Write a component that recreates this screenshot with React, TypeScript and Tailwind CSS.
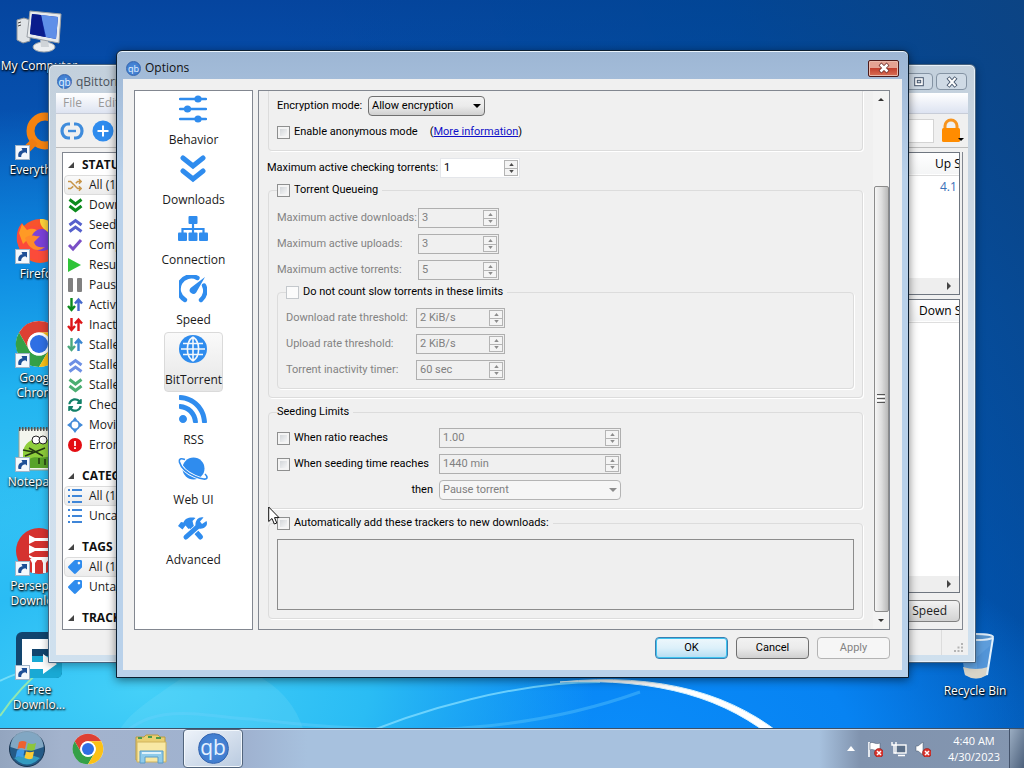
import type { ReactNode } from "react";
import clsx from "clsx";
import { FaRss, FaSyncAlt, FaTag } from "react-icons/fa";

/* ---------- shared drawings ---------- */

function Svg({ size, box = 28, children, className }: { size?: string; box?: number; children: ReactNode; className?: string }) {
  return (
    <svg viewBox={`0 0 ${box} ${box}`} className={clsx(size ?? "size-7", "shrink-0", className)} fill="none" aria-hidden="true">
      {children}
    </svg>
  );
}

function QbLogo({ className, text }: { className: string; text: string }) {
  return (
    <span
      className={clsx(
        "flex shrink-0 items-center justify-center rounded-full border border-[#3566b0] bg-radial from-[#4d8fe0] to-[#3b74c6] leading-none text-[#e4f1ff]",
        className,
      )}
    >
      <span className={text}>qb</span>
    </span>
  );
}

function ChromeLogo({ className }: { className: string }) {
  return (
    <svg viewBox="0 0 48 48" className={className} aria-hidden="true">
      <circle cx="24" cy="24" r="23" fill="#fff" />
      <path d="M4 12.5A23 23 0 0 1 43.9 12.5H24A11.5 11.5 0 0 0 14 29.8Z" fill="#dd4033" />
      <path d="M4 12.5A23 23 0 0 0 24 47L34 29.8A11.5 11.5 0 0 1 14 29.8Z" fill="#34a047" />
      <path d="M43.9 12.5A23 23 0 0 1 24 47L34 29.8A11.5 11.5 0 0 0 34 18.3L24 12.5Z" fill="#fbc116" />
      <circle cx="24" cy="24" r="11.5" fill="#fff" />
      <circle cx="24" cy="24" r="9" fill="#2f6fe4" />
    </svg>
  );
}

/* ---------- desktop ---------- */

function Wallpaper() {
  return (
    <div className="absolute inset-0 bg-[linear-gradient(90deg,#0669d6_0%,#0668d8_60%,#0560cc_100%)]">
      <div className="absolute inset-0 bg-[linear-gradient(180deg,#05459f_0%,#0650ae_14%,#0660c8_40%,transparent_80%)]" />
      <div className="absolute inset-0 bg-[linear-gradient(245deg,#0c4484_0%,#0046909c_22%,transparent_55%)]" />
      <div className="absolute inset-0 bg-[radial-gradient(ellipse_70%_60%_at_6%_74%,#3cc8f6_0%,#22b4f0_38%,#0e8ce2_66%,transparent_100%)]" />
      <div className="absolute inset-0 bg-[radial-gradient(ellipse_46%_30%_at_60%_96%,#0a8cfa_0%,#0783f2_50%,transparent_100%)]" />
      <div className="absolute inset-0 bg-[radial-gradient(ellipse_44%_30%_at_14%_90%,#44d0f8_0%,#2abcf4_50%,transparent_100%)]" />
      <svg viewBox="0 0 1024 768" preserveAspectRatio="none" className="absolute inset-0 size-full" fill="none">
        <path d="M0 681C16 672 30 672 48 660" stroke="#8ee8fa" strokeWidth="2" opacity=".7" />
        <path d="M0 716C12 698 26 682 48 664" stroke="#a8f0a0" strokeWidth="2" opacity=".8" />
        <path d="M116 740C120 718 150 700 182 678H262Q298 700 306 740Z" fill="#8ce6fb" opacity=".18" />
        <path d="M116 742C150 700 200 716 250 719C370 732 500 742 640 692" stroke="#6cd0fc" strokeWidth="3" opacity=".35" />
        <path d="M345 742C420 708 520 682 600 682" stroke="#7fdcff" strokeWidth="2" opacity=".8" />
        <path d="M560 682C660 672 736 694 790 742H778C726 698 660 678 560 682Z" fill="#fff" stroke="#d6f3ff" />
      </svg>
    </div>
  );
}

function ShortcutArrow() {
  return (
    <svg viewBox="0 0 15 15" className="absolute bottom-0 left-0 size-[15px]" aria-hidden="true">
      <rect x=".5" y=".5" width="14" height="14" fill="#f4f8fc" stroke="#9fb4c8" />
      <path d="M3.5 12C2.5 8 4.5 5.5 7.5 5.2L6.5 3H12V8.5L10.3 7.2C7.5 7.5 6 9.5 6.2 12Z" fill="#1d4f96" />
    </svg>
  );
}

function DesktopIcon({ label, shortcut = true, children }: { label: ReactNode; shortcut?: boolean; children: ReactNode }) {
  return (
    <a
      href="#"
      className="flex h-[104px] flex-col items-center text-center text-xs leading-[15px] whitespace-nowrap text-white [text-shadow:0_1px_2px_#000,1px_1px_2px_#000]"
    >
      <span className="relative mb-0.5 block size-12">
        {children}
        {shortcut && <ShortcutArrow />}
      </span>
      {label}
    </a>
  );
}

function DesktopIcons() {
  return (
    <nav className="absolute top-2 left-px flex w-[76px] flex-col">
      <DesktopIcon label="My Computer" shortcut={false}>
        <svg viewBox="0 0 48 48" className="size-12">
          <path d="M2 12 9 10 15 12V33L8 35 2 32Z" fill="#dfe3e6" stroke="#8d9399" />
          <path d="M3 15 6 14M3 18 6 17" stroke="#444" />
          <ellipse cx="29" cy="39" rx="11" ry="5" fill="#eceff1" stroke="#a3a9ad" />
          <path d="M25 30 33 31 34 39H26Z" fill="#cfd4d8" />
          <path d="M15 3 46 6 44 35 12 29Z" fill="#e8ebed" stroke="#9aa0a6" />
          <path d="M17 6 43 9 41 31 15 26Z" fill="#1230a8" />
          <path d="M26 7 43 9 41 31 31 29Z" fill="#5f8fe8" />
          <path d="M17 6 26 7 30 29 15 26Z" fill="#0a1c8c" />
        </svg>
      </DesktopIcon>
      <DesktopIcon label="Everything">
        <svg viewBox="0 0 48 48" className="size-12" fill="none">
          <circle cx="30" cy="19" r="14.5" stroke="#f58310" strokeWidth="8" />
          <path d="M20 29 8 41" stroke="#f07c10" strokeWidth="8" />
        </svg>
      </DesktopIcon>
      <DesktopIcon label="Firefox">
        <svg viewBox="0 0 48 48" className="size-12">
          <circle cx="25" cy="25" r="22" fill="#f8532c" />
          <path d="M2 26C1 16 4 10 7 7L11 13C18 8 24 10 27 13C18 14 14 20 17 28C22 38 36 36 40 28L46 32C38 48 8 50 2 26Z" fill="#fb4b3a" />
          <path d="M4 17 7 8 12 14C16 12 22 12 24 17L14 22 8 28Z" fill="#ff9a25" />
          <circle cx="27" cy="24" r="11" fill="#7a41d8" />
          <path d="M25 3C34 2 46 12 46 25C44 19 40 17 37 20C32 14 24 12 25 3Z" fill="#ffd43c" />
          <path d="M10 22C16 17 20 21 25 20L19 26C20 31 26 32 30 31C22 38 13 32 10 22Z" fill="#ff8a2a" />
        </svg>
      </DesktopIcon>
      <DesktopIcon
        label={
          <>
            Google
            <br />
            Chrome
          </>
        }
      >
        <ChromeLogo className="size-12" />
      </DesktopIcon>
      <DesktopIcon label="Notepad++">
        <svg viewBox="0 0 48 48" className="size-12">
          <path d="M4 5H46V46H4Z" fill="#f3f6ee" stroke="#98a090" />
          <path d="M4 5H46" stroke="#555" strokeWidth="4" strokeDasharray="1.5 1.5" />
          <path d="M8 28C9 18 20 12 30 15C42 16 44 34 34 40L8 36Z" fill="#8fcf3c" />
          <path d="M12 38C18 28 26 38 40 30V44H12Z" fill="#58a32a" />
          <circle cx="21" cy="16" r="4" fill="#fff" stroke="#222" />
          <circle cx="28" cy="16" r="4" fill="#fff" stroke="#222" />
          <path d="M8 26 18 28M10 32 30 24M14 24 28 32M24 40V34M30 41V35" stroke="#223812" strokeWidth="1.5" />
        </svg>
      </DesktopIcon>
      <DesktopIcon
        label={
          <>
            Persepolis
            <br />
            Download
          </>
        }
      >
        <svg viewBox="0 0 48 48" className="size-12">
          <circle cx="24" cy="23" r="23" fill="#d5322f" />
          <path d="M14 7 20 10H36V13H20L14 16ZM14 17 20 20H36V23H20L14 26ZM14 27 18 29H36V32H18L14 29ZM15 31H23L20 35V45H17V35ZM26 31H34L31 35V45H28V35Z" fill="#fff" />
        </svg>
      </DesktopIcon>
      <DesktopIcon
        label={
          <>
            Free
            <br />
            Downlo...
          </>
        }
      >
        <svg viewBox="0 0 48 48" className="size-12">
          <rect x="1" y="0" width="46" height="46" rx="6" fill="#12456e" />
          <path d="M12 46V24H47V40Q47 46 41 46Z" fill="#19a9d4" />
          <path d="M7 7H38V17H17V30H28V22L42 32 28 42V37H7Z" fill="#fff" />
        </svg>
      </DesktopIcon>
    </nav>
  );
}

function RecycleBin() {
  return (
    <a
      href="#"
      className="absolute right-2.5 bottom-[70px] flex w-[78px] flex-col items-center text-center text-xs leading-[15px] whitespace-nowrap text-white [text-shadow:0_1px_2px_#000,1px_1px_2px_#000]"
    >
      <svg viewBox="0 0 48 48" className="mb-0.5 size-12" aria-hidden="true">
        <path d="M8 4 42 4 36 42Q25 49 14 42Z" fill="#8fc0ec" opacity=".65" />
        <path d="M26 24 40 12 36 40 26 42Z" fill="#4d8fd6" opacity=".6" />
        <path d="M12 34Q25 38 37 34L36 42Q25 49 14 42Z" fill="#d8d4c8" />
        <ellipse cx="25" cy="4" rx="17" ry="3" fill="#5592cc" stroke="#dbe9f5" strokeWidth="2" />
        <path d="M42 5 36 42" stroke="#e3f1fc" strokeWidth="2" />
      </svg>
      Recycle Bin
    </a>
  );
}

/* ---------- main window ---------- */

const chevronsDown = "M1.5 1.5 7.5 6 13.5 1.5M1.5 8 7.5 12.5 13.5 8";
const chevronsUp = "M1.5 7 7.5 2.5 13.5 7M1.5 13.5 7.5 9 13.5 13.5";

function Chevrons({ d, color }: { d: string; color: string }) {
  return (
    <Svg size="size-[15px]" box={15}>
      <path d={d} stroke={color} strokeWidth="3" />
    </Svg>
  );
}

function UpDown({ down, up }: { down: string; up: string }) {
  return (
    <Svg size="size-4" box={16}>
      <path d="M4.5 1V12M1 9 4.5 13 8 9" stroke={down} strokeWidth="2.4" />
      <path d="M11.5 14V4M8 6.5 11.5 2.5 15 6.5" stroke={up} strokeWidth="2.4" />
    </Svg>
  );
}

function ListIcon() {
  return (
    <Svg size="size-[14px]" box={14}>
      <path d="M0 1H2M0 7H2M0 13H2M4 1H14M4 7H14M4 13H14" stroke="#3f86d8" strokeWidth="2" />
    </Svg>
  );
}

const tagIcon = <FaTag className="size-[14px] rotate-90 text-[#2f8cee]" />;

const filters = [
  {
    title: "STATUS",
    rows: [
      {
        label: "All (1)",
        icon: (
          <Svg size="size-[14px]" box={16}>
            <path d="M0 4H3L11 12H15M0 12H3L6 9.5M9 6 11 4H15M12.5 1.5 15 4 12.5 6.5M12.5 9.5 15 12 12.5 14.5" stroke="#c79549" strokeWidth="1.8" />
          </Svg>
        ),
      },
      { label: "Downloading (0)", icon: <Chevrons d={chevronsDown} color="#0c8a1c" /> },
      { label: "Seeding (1)", icon: <Chevrons d={chevronsUp} color="#5560cc" /> },
      {
        label: "Completed (1)",
        icon: (
          <Svg size="size-4" box={16}>
            <path d="M2 8 6 12 14 3" stroke="#7a4fc6" strokeWidth="3" />
          </Svg>
        ),
      },
      {
        label: "Resumed (1)",
        icon: (
          <Svg size="size-4" box={16}>
            <path d="M1 1 14 8 1 15Z" fill="#2fc438" />
          </Svg>
        ),
      },
      {
        label: "Paused (0)",
        icon: (
          <Svg size="size-4" box={16}>
            <rect x="1" y="1" width="5" height="14" rx="1" fill="#808080" />
            <rect x="10" y="1" width="5" height="14" rx="1" fill="#808080" />
          </Svg>
        ),
      },
      { label: "Active (1)", icon: <UpDown down="#0c8a1c" up="#4468cc" /> },
      { label: "Inactive (0)", icon: <UpDown down="#dd1518" up="#dd1518" /> },
      { label: "Stalled (0)", icon: <UpDown down="#4aa87c" up="#3a86d0" /> },
      { label: "Stalled Uploading (0)", icon: <Chevrons d={chevronsUp} color="#6e90e4" /> },
      { label: "Stalled Downloading (0)", icon: <Chevrons d={chevronsDown} color="#4cae72" /> },
      { label: "Checking (0)", icon: <FaSyncAlt className="size-[14px] text-[#128068]" /> },
      {
        label: "Moving (0)",
        icon: (
          <Svg size="size-4" box={16}>
            <circle cx="8" cy="8" r="4.3" stroke="#428ad8" strokeWidth="1.8" />
            <path d="M8 0 10.5 3.5H5.5ZM8 16 10.5 12.5H5.5ZM0 8 3.5 5.5V10.5ZM16 8 12.5 5.5V10.5Z" fill="#428ad8" />
          </Svg>
        ),
      },
      {
        label: "Errored (0)",
        icon: (
          <Svg size="size-[14px]" box={16}>
            <circle cx="8" cy="8" r="8" fill="#e40d12" />
            <path d="M8 3.5V9M8 10.5V12.5" stroke="#fff" strokeWidth="2" />
          </Svg>
        ),
      },
    ],
  },
  {
    title: "CATEGORIES",
    rows: [
      { label: "All (1)", icon: <ListIcon /> },
      { label: "Uncategorized (1)", icon: <ListIcon /> },
    ],
  },
  {
    title: "TAGS",
    rows: [
      { label: "All (1)", icon: tagIcon },
      { label: "Untagged (1)", icon: tagIcon },
    ],
  },
  { title: "TRACKERS", rows: [] },
];

function FilterSidebar() {
  return (
    <aside className="flex w-[200px] shrink-0 flex-col gap-[11px] overflow-hidden border border-[#828790] bg-white pt-0.5">
      {filters.map((group) => (
        <section key={group.title}>
          <h2 className="flex h-5 items-center pl-[5px] text-xs font-bold text-[#111]">
            <Svg size="size-[6px]" box={7} className="mr-2">
              <path d="M7 0V7H0Z" fill="#444" />
            </Svg>
            {group.title}
          </h2>
          <ul>
            {group.rows.map((row, i) => (
              <li
                key={row.label}
                className={clsx(
                  "ml-px flex h-5 items-center gap-1.5 rounded-sm border pl-0.5 text-xs whitespace-nowrap text-[#1c1c1c]",
                  i === 0 ? "border-[#dcdcdc] bg-linear-to-b from-[#fafafa] to-[#ececec]" : "border-transparent",
                )}
              >
                <span className="flex w-4 justify-center">{row.icon}</span>
                {row.label}
              </li>
            ))}
          </ul>
        </section>
      ))}
    </aside>
  );
}

function TransferTable({ header, indent, value, className }: { header: string; indent: string; value?: string; className: string }) {
  return (
    <div className={clsx("flex flex-col border border-[#6f7680] bg-white", className)}>
      <table className="w-full table-fixed text-xs">
        <thead>
          <tr className="h-[22px] border-b border-[#dedede] bg-linear-to-b from-white to-[#f4f5f6]">
            <th className="text-left font-normal">Name</th>
            <th className={clsx("w-12 overflow-hidden text-left font-normal whitespace-nowrap", indent)}>{header}</th>
          </tr>
        </thead>
        {value && (
          <tbody>
            <tr className="h-6">
              <td />
              <td className="overflow-hidden pl-[29px] whitespace-nowrap text-[#3a70b8]">{value}</td>
            </tr>
          </tbody>
        )}
      </table>
      <div className="mt-auto flex h-4 items-center justify-end bg-[#eeeeee] pr-1.5">
        <Svg size="size-2" box={8}>
          <path d="M2 0 6 4 2 8Z" fill="#444" />
        </Svg>
      </div>
    </div>
  );
}

function MainWindow() {
  return (
    <section className="absolute top-16 right-12 bottom-[105px] left-12 flex flex-col rounded-t-md border border-[#47627d] bg-linear-to-b from-[#c3d0dc] via-[#d2dfec] to-[#cfe0ee] px-[7px] pb-[7px] shadow-[inset_0_0_0_1px_#e8f1f9,0_2px_8px_#00000059]">
      <header className="flex h-7 shrink-0 items-start">
        <QbLogo className="mt-[9px] ml-px size-[15px]" text="text-[10px]" />
        <h1 className="mt-2 ml-1 text-xs leading-[18px] text-[#4b535c]">qBittorrent v4.5.2</h1>
        <div className="mt-2 mr-px ml-auto flex gap-[3px]">
          <button type="button" aria-label="Minimize" className="h-[17px] w-7 rounded-sm border border-[#8493a3] bg-[#cfdae5]" />
          <button type="button" aria-label="Maximize" className="flex h-[17px] w-7 items-center justify-center rounded-sm border border-[#8493a3] bg-[#cfdae5]">
            <Svg size="size-2.5" box={10}>
              <rect x=".7" y=".7" width="8.6" height="8" fill="#fff" stroke="#46566c" />
              <rect x="3.3" y="3.3" width="3.4" height="2.5" fill="#cfdae5" stroke="#46566c" />
            </Svg>
          </button>
          <button type="button" aria-label="Close" className="flex h-[17px] w-[31px] items-center justify-center rounded-sm border border-[#8493a3] bg-[#cfdae5]">
            <Svg size="size-3" box={12}>
              <path d="M2 1.5 10 10.5M10 1.5 2 10.5" stroke="#46566c" strokeWidth="4" />
              <path d="M2.5 2 9.5 10M9.5 2 2.5 10" stroke="#fff" strokeWidth="2" />
            </Svg>
          </button>
        </div>
      </header>
      <div className="flex min-h-0 flex-1 flex-col bg-[#f0f0f0]">
        <nav className="flex h-[21px] shrink-0 items-center gap-4 border-b border-[#c8cdd8] bg-linear-to-b from-white via-[#eef1f8] to-[#dde3f1] pl-[7px] text-xs text-[#9a9a9a]">
          <a href="#">File</a>
          <a href="#">Edit</a>
          <a href="#">View</a>
        </nav>
        <div className="flex h-[34px] shrink-0 items-center gap-2 border-b border-[#bdbdbd] pl-1">
          <button type="button" aria-label="Add torrent link">
            <Svg size="size-6" box={24}>
              <path d="M10 5H8A6 7 0 0 0 8 19H10M14 5H16A6 7 0 0 1 16 19H14" stroke="#3f8cdc" strokeWidth="3.2" />
              <path d="M8 12H16" stroke="#3f8cdc" strokeWidth="2.4" />
            </Svg>
          </button>
          <button type="button" aria-label="Add torrent file">
            <Svg size="size-[22px]" box={22}>
              <circle cx="11" cy="11" r="10.5" fill="#2f8cee" />
              <path d="M11 5.5V16.5M5.5 11H16.5" stroke="#fff" strokeWidth="2" />
            </Svg>
          </button>
          <input type="text" aria-label="Filter torrents" className="ml-auto h-6 w-40 border border-[#d4d4d4] bg-white" />
          <button type="button" aria-label="Lock" className="mr-1">
            <svg viewBox="2 0 22 26" className="h-[26px] w-[22px]" fill="none">
              <path d="M5 12V8A6 6 0 0 1 17 8V12" stroke="#f7941e" strokeWidth="3" />
              <rect x="2" y="10" width="18" height="14" rx="1.5" fill="#ff8c00" />
              <path d="M18 20H24L21 23Z" fill="#000" />
            </svg>
          </button>
        </div>
        <main className="flex min-h-0 flex-1 gap-1 pt-1 pr-[5px] pl-1.5">
          <FilterSidebar />
          <div className="flex min-w-0 flex-1 flex-col border-r border-b border-[#828790] pr-0.5">
            <TransferTable header="Up Speed" indent="pl-6" value="4.1 KiB/s" className="h-[143px] shrink-0" />
            <TransferTable header="Down Speed" indent="pl-2" className="mt-1 min-h-0 flex-1" />
            <div className="flex h-9 shrink-0 items-center justify-end">
              <button
                type="button"
                className="flex h-[22px] items-center gap-1 rounded-sm border border-[#808080] bg-linear-to-b from-[#f2f2f2] to-[#d2d2d2] pr-3 pl-2 text-xs text-[#222]"
              >
                <span className="h-3 w-2 bg-[#25b83a]" />
                Speed
              </button>
            </div>
          </div>
        </main>
        <footer className="flex h-[25px] shrink-0 items-end justify-end">
          <span className="flex h-full w-[27px] items-end justify-end border-l border-[#dcdcdc] pr-1 pb-0.5">
            <Svg size="size-2.5" box={10}>
              <path d="M7 1H9M7 4.5H9M7 8H9M3.5 4.5H5.5M3.5 8H5.5M0 8H2" stroke="#b4b4b4" strokeWidth="2" />
            </Svg>
          </span>
        </footer>
      </div>
    </section>
  );
}

/* ---------- options dialog ---------- */

const sections = [
  {
    label: "Behavior",
    icon: (
      <Svg>
        <path d="M1 4H27M1 14H27M1 24H27" stroke="currentColor" strokeWidth="2.4" strokeLinecap="round" />
        <circle cx="19" cy="4" r="3.6" fill="currentColor" />
        <circle cx="8.5" cy="14" r="3.6" fill="currentColor" />
        <circle cx="19" cy="24" r="3.6" fill="currentColor" />
      </Svg>
    ),
  },
  {
    label: "Downloads",
    icon: (
      <Svg>
        <path d="M4 3 14 11 24 3M4 16 14 24 24 16" stroke="currentColor" strokeWidth="5" strokeLinecap="round" />
      </Svg>
    ),
  },
  {
    label: "Connection",
    icon: (
      <svg viewBox="0 0 32 28" className="h-7 w-8" fill="none">
        <rect x="11.5" y="1" width="9" height="8" rx="1" fill="currentColor" />
        <path d="M16 8V20M5.5 20V14H26.5V20" stroke="currentColor" strokeWidth="2.2" />
        <rect x="1" y="17.5" width="9" height="8.5" rx="1" fill="currentColor" />
        <rect x="11.5" y="17.5" width="9" height="8.5" rx="1" fill="currentColor" />
        <rect x="22" y="17.5" width="9" height="8.5" rx="1" fill="currentColor" />
      </svg>
    ),
  },
  {
    label: "Speed",
    icon: (
      <Svg>
        <path d="M6 25A12 12 0 0 1 18.5 3M25 10.5A12 12 0 0 1 22 25" stroke="currentColor" strokeWidth="4.4" strokeLinecap="round" />
        <path d="M26 2 17.2 17.5A3.6 3.6 0 1 1 11.5 13Z" fill="currentColor" />
      </Svg>
    ),
  },
  {
    label: "BitTorrent",
    icon: (
      <Svg>
        <circle cx="14" cy="14" r="14" fill="currentColor" />
        <path
          d="M14 2V26M2 14H26M4 8.5H24M4 19.5H24M14 2C6.5 7 6.5 21 14 26M14 2C21.5 7 21.5 21 14 26"
          stroke="#f4f8fc"
          strokeWidth="1.6"
        />
      </Svg>
    ),
  },
  {
    label: "RSS",
    icon: <FaRss className="size-8" />,
  },
  {
    label: "Web UI",
    icon: (
      <svg viewBox="0 0 30 28" className="h-7 w-[30px]" fill="none">
        <circle cx="15.5" cy="13.5" r="11" fill="currentColor" />
        <path d="M7 4.5C2.5 3 .8 4 1.4 7C3 12.5 9 18 17 21.5C24 24.5 29 25 29 22.5C29 21 28 20 27 19" stroke="#fff" strokeWidth="3.4" />
        <path d="M7 4.5C2.5 3 .8 4 1.4 7C3 12.5 9 18 17 21.5C24 24.5 29 25 29 22.5C29 21 28 20 27 19" stroke="currentColor" strokeWidth="1.6" />
      </svg>
    ),
  },
  {
    label: "Advanced",
    icon: (
      <svg viewBox="0 0 30 28" className="h-7 w-[30px]" fill="none">
        <path d="M11 9 22.5 22" stroke="currentColor" strokeWidth="5" strokeLinecap="round" />
        <path d="M0 11 3 7 5.5 7.5C6.500 3.500 12 1.500 17.500 3L14.500 6 15.500 10 10.500 14 7.500 10.500 4.500 14.500Z" fill="currentColor" />
        <path d="M19 12.500 10 20.500" stroke="#fff" strokeWidth="6.400" />
        <path d="M21 10.500 8 22" stroke="currentColor" strokeWidth="5" strokeLinecap="round" />
        <path d="M25.500 2.500 22 6.500 24 9 28.500 6C30.500 11 26 14.500 21 13.500L17.500 10.500C17 5.500 20.500 1.500 25.500 2.500Z" fill="currentColor" />
      </svg>
    ),
  },
];

function Checkbox({ id, flat }: { id: string; flat?: boolean }) {
  return (
    <input
      type="checkbox"
      id={id}
      className={clsx(
        "size-[13px] shrink-0 appearance-none border",
        flat ? "border-[#c4c8cc] bg-[#fbfbfb]" : "border-[#8e8f8f] bg-linear-to-br from-[#c9cdd1] to-white shadow-[inset_0_0_0_2px_#f4f4f4]",
      )}
    />
  );
}

function CheckLabel({ id, flat, children }: { id: string; flat?: boolean; children: ReactNode }) {
  return (
    <div className="flex items-center gap-1">
      <Checkbox id={id} flat={flat} />
      <label htmlFor={id}>{children}</label>
    </div>
  );
}

function SpinBox({ id, value, width, enabled, label }: { id: string; value: string; width: string; enabled?: boolean; label?: string }) {
  const arrowColor = enabled ? "#4a4a4a" : "#8c8c8c";
  return (
    <div className={clsx("flex h-5 border p-px", width, enabled ? "border-[#e4e6ea] bg-white" : "border-[#afafaf] bg-[#f0f0f0]")}>
      <input
        type="text"
        id={id}
        aria-label={label}
        defaultValue={value}
        disabled={!enabled}
        className={clsx("min-w-0 flex-1 bg-transparent px-0.5", enabled ? "text-black" : "text-[#808080]")}
      />
      <div className="flex w-[14px] shrink-0 flex-col border border-[#b4b4b4] bg-[#f4f4f4]">
        <button type="button" aria-label="Increase" disabled={!enabled} className="flex flex-1 items-center justify-center border-b border-[#b4b4b4]">
          <svg viewBox="0 0 6 4" className="h-[3px] w-[5px]">
            <path d="M0 4 3 0 6 4Z" fill={arrowColor} />
          </svg>
        </button>
        <button type="button" aria-label="Decrease" disabled={!enabled} className="flex flex-1 items-center justify-center">
          <svg viewBox="0 0 6 4" className="h-[3px] w-[5px]">
            <path d="M0 0 3 4 6 0Z" fill={arrowColor} />
          </svg>
        </button>
      </div>
    </div>
  );
}

function SpinRow({ id, label, value, column, width }: { id: string; label: string; value: string; column: string; width: string }) {
  return (
    <div className="flex h-5 items-center">
      <label htmlFor={id} className={clsx("shrink-0 text-[#838383]", column)}>
        {label}
      </label>
      <SpinBox id={id} value={value} width={width} />
    </div>
  );
}

function Group({ legend, className, children }: { legend: ReactNode; className: string; children: ReactNode }) {
  return (
    <fieldset className={clsx("min-w-0 rounded-sm border border-[#dcdcdc] px-2 shadow-[1px_1px_0_#fff]", className)}>
      <legend className="h-4 pr-1">{legend}</legend>
      {children}
    </fieldset>
  );
}

function Dropdown({ id, value, disabled, className }: { id: string; value: string; disabled?: boolean; className: string }) {
  return (
    <div className={clsx("relative", className)}>
      <select
        id={id}
        disabled={disabled}
        className={clsx(
          "block h-5 w-full appearance-none rounded-sm border pl-[3px]",
          disabled
            ? "border-[#b4b4b4] bg-[#f6f6f6] text-[#808080] opacity-100"
            : "border-[#707070] bg-linear-to-b from-[#f2f2f2] via-[#ebebeb] to-[#d0d0d0] text-black",
        )}
      >
        <option>{value}</option>
      </select>
      <svg viewBox="0 0 8 4" className="pointer-events-none absolute top-2 right-1 h-1 w-2">
        <path d="M0 0H8L4 4Z" fill={disabled ? "#8c8c8c" : "#000"} />
      </svg>
    </div>
  );
}

function BitTorrentPage() {
  return (
    <div className="min-w-0 flex-1 overflow-hidden pr-2.5 pl-[9px] whitespace-nowrap">
      <div className="flex flex-col gap-1.5 rounded-b-sm border border-t-0 border-[#dcdcdc] px-2 pt-[5px] pb-2 shadow-[1px_1px_0_#fff]">
        <div className="flex h-5 items-center">
          <label htmlFor="encryption" className="w-[91px]">
            Encryption mode:
          </label>
          <Dropdown id="encryption" value="Allow encryption" className="w-[117px]" />
        </div>
        <div className="flex h-5 items-center gap-3">
          <CheckLabel id="anonymous">Enable anonymous mode</CheckLabel>
          <span>
            (
            <a href="#" className="text-[#1010c8] underline">
              More information
            </a>
            )
          </span>
        </div>
      </div>

      <div className="mt-[7px] -ml-px flex h-5 items-center">
        <label htmlFor="checking" className="w-[173px]">
          Maximum active checking torrents:
        </label>
        <SpinBox id="checking" value="1" width="w-20" enabled />
      </div>

      <Group className="mt-1 pb-2" legend={<CheckLabel id="queueing">Torrent Queueing</CheckLabel>}>
        <div className="flex flex-col gap-1.5 pt-2.5">
          <SpinRow id="max-down" label="Maximum active downloads:" value="3" column="w-[141px]" width="w-[81px]" />
          <SpinRow id="max-up" label="Maximum active uploads:" value="3" column="w-[141px]" width="w-[81px]" />
          <SpinRow id="max-torrents" label="Maximum active torrents:" value="5" column="w-[141px]" width="w-[81px]" />
        </div>
        <Group
          className="mt-1 pb-2"
          legend={
            <CheckLabel id="slow" flat>
              Do not count slow torrents in these limits
            </CheckLabel>
          }
        >
          <div className="flex flex-col gap-1.5 pt-2">
            <SpinRow id="rate-down" label="Download rate threshold:" value="2 KiB/s" column="w-[130px]" width="w-[89px]" />
            <SpinRow id="rate-up" label="Upload rate threshold:" value="2 KiB/s" column="w-[130px]" width="w-[89px]" />
            <SpinRow id="inactivity" label="Torrent inactivity timer:" value="60 sec" column="w-[130px]" width="w-[89px]" />
          </div>
        </Group>
      </Group>

      <Group className="mt-1.5 pb-2" legend="Seeding Limits">
        <div className="grid grid-cols-[156px_182px] items-center gap-x-1.5 gap-y-1.5 pt-2">
          <CheckLabel id="ratio">When ratio reaches</CheckLabel>
          <SpinBox id="ratio-value" label="Ratio limit" value="1.00" width="w-full" />
          <CheckLabel id="time">When seeding time reaches</CheckLabel>
          <SpinBox id="time-value" label="Seeding time limit" value="1440 min" width="w-full" />
          <label htmlFor="then" className="text-right">
            then
          </label>
          <Dropdown id="then" value="Pause torrent" disabled className="w-full" />
        </div>
      </Group>

      <Group className="mt-1.5 pb-2" legend={<CheckLabel id="trackers">Automatically add these trackers to new downloads:</CheckLabel>}>
        <div className="pt-2">
          <textarea aria-label="Trackers" disabled className="block h-[71px] w-full resize-none border border-[#8c8c8c] bg-[#efefef]" />
        </div>
      </Group>
    </div>
  );
}

function ScrollBar() {
  return (
    <div className="flex w-4 shrink-0 flex-col items-center bg-[#f3f3f3]">
      <button type="button" aria-label="Scroll up" className="flex h-[17px] w-full items-center justify-center">
        <svg viewBox="0 0 8 4" className="h-[3px] w-1.5">
          <path d="M0 4 4 0 8 4Z" fill="#333" />
        </svg>
      </button>
      <div className="w-full flex-[78]" />
      <div className="flex w-[15px] flex-[425] flex-col items-center justify-center gap-px rounded-xs border border-[#8b8b8b] bg-linear-to-r from-[#f6f6f6] via-[#dedede] to-[#b9b9b9]">
        <span className="h-px w-2 bg-[#555]" />
        <span className="h-px w-2 bg-white" />
        <span className="h-px w-2 bg-[#555]" />
        <span className="h-px w-2 bg-white" />
        <span className="h-px w-2 bg-[#555]" />
      </div>
      <button type="button" aria-label="Scroll down" className="flex h-[17px] w-full items-center justify-center">
        <svg viewBox="0 0 8 4" className="h-[3px] w-1.5">
          <path d="M0 0H8L4 4Z" fill="#333" />
        </svg>
      </button>
    </div>
  );
}

function OptionsDialog() {
  return (
    <section
      role="dialog"
      aria-label="Options"
      className="absolute top-[50px] right-[115px] bottom-[90px] left-[116px] flex flex-col rounded-t-md border border-[#0c1e30] bg-linear-to-b from-[#9db6d4] via-[#b9d1ea] via-20% to-[#b9d1ea] px-1.5 pb-[7px] shadow-[inset_0_1px_0_#eaf4fc,0_2px_10px_#00000080]"
    >
      <header className="flex h-7 shrink-0 items-center px-[3px] pt-1.5">
        <QbLogo className="size-[15px]" text="text-[9px]" />
        <h2 className="ml-1 text-xs text-[#111]">Options</h2>
        <button
          type="button"
          aria-label="Close"
          className="ml-auto flex h-[17px] w-[31px] items-center justify-center rounded-xs border border-[#4d1a1a] bg-linear-to-b from-[#e5a293] from-45% via-[#c3402f] via-50% to-[#d96f55] shadow-[inset_0_0_0_1px_#eab9ab]"
        >
          <Svg size="size-3" box={12}>
            <path d="M2 2 10 10M10 2 2 10" stroke="#6b2a26" strokeWidth="4" />
            <path d="M2.5 2.5 9.5 9.5M9.5 2.5 2.5 9.5" stroke="#fff" strokeWidth="2.6" />
          </Svg>
        </button>
      </header>

      <div className="flex min-h-0 flex-1 flex-col bg-[#f0f0f0] py-[11px] pr-3 pl-[11px]">
        <div className="flex min-h-0 flex-1 gap-[5px]">
          <nav className="flex w-[119px] shrink-0 flex-col items-center border border-[#828790] bg-white pt-px">
            {sections.map((s) => (
              <button
                key={s.label}
                type="button"
                className={clsx(
                  "flex h-[60px] w-[59px] flex-col items-center rounded-sm border pt-0.5 text-xs leading-4 whitespace-nowrap text-[#1a1a1a]",
                  s.label === "BitTorrent" ? "border-[#dadada] bg-linear-to-b from-[#fafafa] to-[#e6e6e6]" : "border-transparent",
                )}
              >
                <span className="mb-[9px] flex h-7 items-center pr-px text-[#2f8cee]">{s.icon}</span>
                {s.label}
              </button>
            ))}
          </nav>
          <div className="flex min-w-0 flex-1 border border-[#828790] font-[Roboto,'Open_Sans',sans-serif] text-[11px] leading-4 text-black">
            <BitTorrentPage />
            <ScrollBar />
          </div>
        </div>
        <div className="mt-[7px] flex justify-end gap-2 font-[Roboto,'Open_Sans',sans-serif] text-[11px]">
          <button
            type="button"
            className="h-[22px] w-[73px] rounded-sm border border-[#3c7fb1] bg-linear-to-b from-[#eef7fc] via-[#dcf0fa] to-[#b4dcf2] shadow-[inset_0_0_0_1px_#3fc4f0]"
          >
            OK
          </button>
          <button type="button" className="h-[22px] w-[73px] rounded-sm border border-[#707070] bg-linear-to-b from-[#f2f2f2] via-[#ebebeb] to-[#d0d0d0]">
            Cancel
          </button>
          <button type="button" disabled className="h-[22px] w-[73px] rounded-sm border border-[#b4b4b4] bg-[#f6f6f6] text-[#838383]">
            Apply
          </button>
        </div>
      </div>
    </section>
  );
}

/* ---------- taskbar ---------- */

function RedCross() {
  return (
    <>
      <circle cx="12" cy="12" r="4.5" fill="#d8322c" stroke="#8e1c18" strokeWidth=".6" />
      <path d="M10 10 14 14M14 10 10 14" stroke="#fff" strokeWidth="1.5" />
    </>
  );
}

function Taskbar() {
  return (
    <footer className="relative mt-auto flex h-10 shrink-0 items-stretch border-t border-[#3c5068] bg-[linear-gradient(90deg,#93a5bf_0%,#a3b3cd_6%,#9fb2d0_24%,#a7c1de_30%,#a7c1de_80%,#8093ae_84%,#8496b0_100%)] shadow-[inset_0_1px_0_#ccdbec]">
      <button type="button" aria-label="Start" className="ml-2 flex items-center">
        <svg viewBox="0 0 38 38" className="size-[38px]" fill="none">
          <circle cx="19" cy="19" r="17.5" fill="#245a86" stroke="#16324e" />
          <path d="M2.5 17A16.5 16.5 0 0 1 35.5 17Q19 24 2.5 17Z" fill="#a9c8dd" opacity=".7" />
          <path d="M6 28Q19 41 32 28Q19 22 6 28Z" fill="#3ec6e8" opacity=".6" />
          <path d="M11 12Q14.5 10 18.5 12L17 19Q13 17 9.5 19Z" fill="#ee6230" />
          <path d="M20 13Q24 15 28 13L26.5 20Q22.5 21.5 18.5 19.5Z" fill="#8cc63c" />
          <path d="M9 20.5Q13 18.5 16.5 20.5L15 27.5Q11.5 25.5 7.5 27.5Z" fill="#3f9be8" />
          <path d="M18 21.5Q22 23 26 21.5L24.5 28.5Q20.5 30 16.5 28Z" fill="#fccb34" />
        </svg>
      </button>
      <button type="button" aria-label="Chrome" className="ml-[26px] flex items-center">
        <ChromeLogo className="size-8" />
      </button>
      <button type="button" aria-label="Explorer" className="ml-[30px] flex items-center">
        <svg viewBox="0 0 34 32" className="h-8 w-[34px]" fill="none">
          <path d="M2 4H10L12 2H24L26 4H31V27H2Z" fill="#e9cf72" stroke="#b99b42" />
          <path d="M4 5H8M14 4H18M22 5H27" stroke="#4a9a4a" strokeWidth="2" />
          <path d="M3 9H32V29H3Z" fill="#f8e8a4" stroke="#d0b35c" />
          <path d="M6 30V18H29V30H24V24H11V30Z" fill="#8fcbea" stroke="#5a9cc8" />
          <path d="M8 20H27" stroke="#dff2fb" strokeWidth="2" />
        </svg>
      </button>
      <button
        type="button"
        aria-label="qBittorrent"
        className="ml-[15px] flex w-[60px] items-center justify-center rounded-sm border border-[#52657d] bg-linear-to-br from-[#eef3fa] to-[#b9cadf] shadow-[inset_0_0_0_1px_#f2f7fc]"
      >
        <QbLogo className="size-[31px]" text="pb-0.5 text-[21px]" />
      </button>

      <div className="ml-auto flex items-center gap-2">
        <svg viewBox="0 0 8 5" className="mr-1 h-[5px] w-2">
          <path d="M0 5 4 0 8 5Z" fill="#fff" />
        </svg>
        <Svg size="size-4" box={16}>
          <path d="M2 1V16" stroke="#fff" strokeWidth="1.6" />
          <path d="M3 2C6 0 8 4 13 2V9C8 11 6 7 3 9Z" fill="#fff" stroke="#44546a" strokeWidth=".5" />
          <RedCross />
        </Svg>
        <Svg size="size-4" box={16}>
          <rect x="5" y="4" width="10" height="8" fill="#5b6f88" stroke="#fff" strokeWidth="1.4" />
          <path d="M7 14.5H14M1 1V4H5V1M3 4V12H5" stroke="#fff" strokeWidth="1.4" />
        </Svg>
        <Svg size="size-4" box={16}>
          <path d="M1 5H3L8 1V14L3 10H1Z" fill="#fff" stroke="#44546a" strokeWidth=".5" />
          <RedCross />
        </Svg>
        <time className="w-[70px] text-center text-[11px] leading-4 text-white">
          4:40 AM
          <br />
          4/30/2023
        </time>
        <button type="button" aria-label="Show desktop" className="-ml-2 h-full w-[15px] border-l border-[#43526a] bg-linear-to-br from-[#9badc2] to-[#4d617c]" />
      </div>
    </footer>
  );
}

export default function App() {
  return (
    <div className="relative flex h-screen w-full flex-col overflow-hidden font-['Open_Sans','Noto_Sans',sans-serif]">
      <Wallpaper />
      <Taskbar />
      <DesktopIcons />
      <RecycleBin />
      <MainWindow />
      <OptionsDialog />
      <svg viewBox="0 0 12 19" className="pointer-events-none absolute top-[506px] left-[268px] h-[19px] w-3" aria-hidden="true">
        <path d="M.7 1V15.5L4 12.5 6.3 18 8.8 17 6.5 11.6H11Z" fill="#fff" stroke="#111" />
      </svg>
    </div>
  );
}
